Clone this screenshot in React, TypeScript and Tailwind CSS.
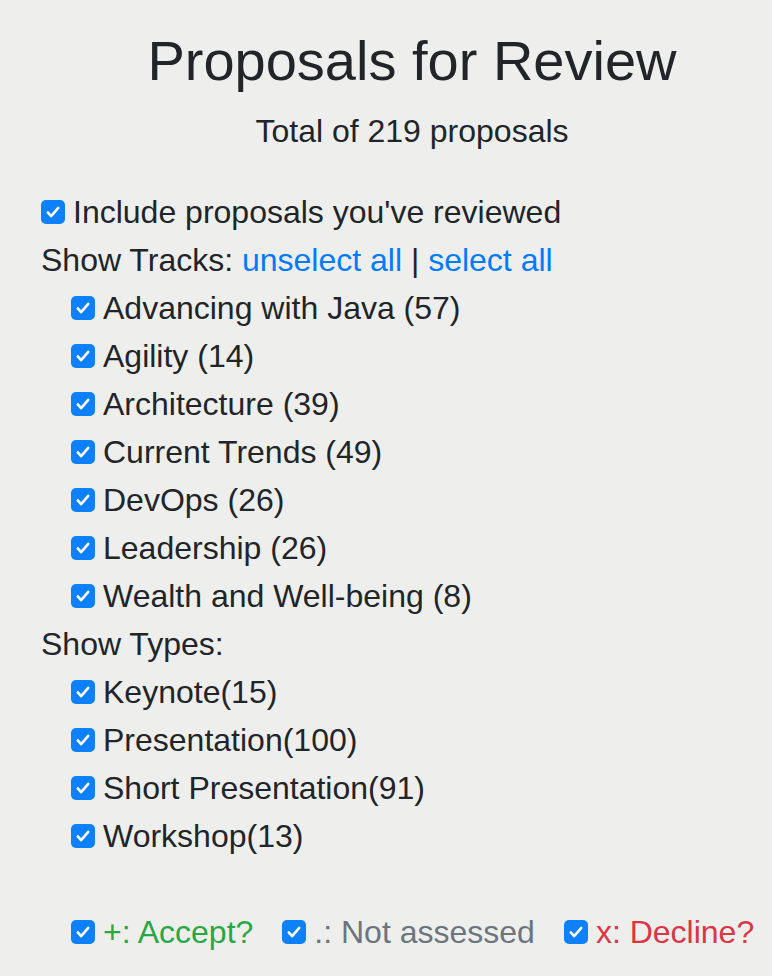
import type { ReactNode } from 'react';

const tracks = [
    'Advancing with Java (57)',
    'Agility (14)',
    'Architecture (39)',
    'Current Trends (49)',
    'DevOps (26)',
    'Leadership (26)',
    'Wealth and Well-being (8)',
];

const types = ['Keynote(15)', 'Presentation(100)', 'Short Presentation(91)', 'Workshop(13)'];

function Box() {
    return (
        <span className="inline-flex h-[24px] w-[24px] shrink-0 items-center justify-center rounded-[5px] bg-[#0d80fc]">
            <svg viewBox="0 0 24 24" className="h-[18px] w-[18px]" fill="none">
                <path d="M5 12.5l4.5 5L19 6.5" stroke="white" strokeWidth="3.4" strokeLinecap="round" strokeLinejoin="round" />
            </svg>
        </span>
    );
}

function Check({ children, className = '' }: { children: ReactNode; className?: string }) {
    return (
        <label className={`flex h-12 items-center gap-[8px] ${className}`}>
            <Box />
            <span className="whitespace-nowrap">{children}</span>
        </label>
    );
}

export default function App() {
    return (
        <div
            className="min-h-[976px] w-[772px] overflow-hidden bg-[#eeefed] pt-[27px] text-[32px] leading-[48px] text-[#212529]"
            style={{ fontFamily: '"Liberation Sans", Arial, sans-serif' }}
        >
            <div className="ml-[40px] w-[744px]">
                <h1 className="text-center text-[56px] leading-[67px] font-normal">Proposals for Review</h1>
                <p className="mt-[13px] text-center">Total of 219 proposals</p>

                <div className="mt-[33px]">
                    <Check className="pl-px">Include proposals you've reviewed</Check>
                    <div className="flex h-12 items-center whitespace-nowrap pl-px">
                        Show Tracks:&nbsp;
                        <a className="text-[#007bff]">unselect all</a>
                        &nbsp;|&nbsp;
                        <a className="text-[#007bff]">select all</a>
                    </div>
                    {tracks.map((t) => (
                        <Check key={t} className="pl-[31px]">
                            {t}
                        </Check>
                    ))}
                    <div className="h-12 pl-px">Show Types:</div>
                    {types.map((t) => (
                        <Check key={t} className="pl-[31px]">
                            {t}
                        </Check>
                    ))}
                    <div className="h-12" />
                    <div className="flex h-12 items-center gap-[29px] pl-[31px]">
                        <Check className="text-[#28a745]">+: Accept?</Check>
                        <Check className="text-[#6c757d]">.: Not assessed</Check>
                        <Check className="text-[#dc3545]">x: Decline?</Check>
                    </div>
                </div>
            </div>
        </div>
    );
}
